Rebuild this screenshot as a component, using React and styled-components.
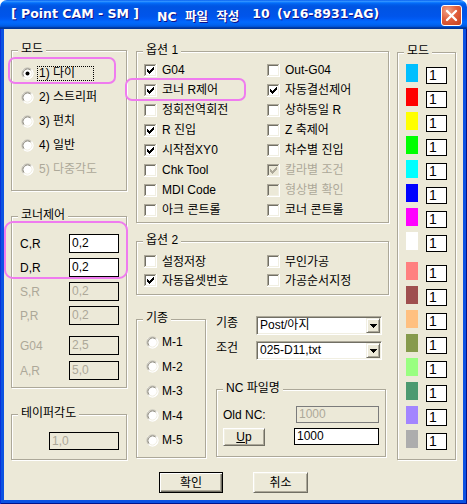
import styled, { createGlobalStyle } from "styled-components"

const FONT = `"Liberation Sans", "Noto Sans CJK KR", sans-serif`
const TITLE_FONT = `"DejaVu Sans", "Noto Sans CJK KR", sans-serif`
const FACE = "#ECE9D8"
const GRAY = "#ACA899"

const GlobalStyle = createGlobalStyle`
  html, body { margin: 0; padding: 0; background: #fff; }
  body { font-family: ${FONT}; font-size: 12px; color: #000; }
`

const modes = [
  { text: "1) 다이", checked: true, focus: true },
  { text: "2) 스트리퍼" },
  { text: "3) 펀치" },
  { text: "4) 일반" },
  { text: "5) 다중각도", disabled: true },
]

const corners = [
  { label: "C,R", value: "0,2" },
  { label: "D,R", value: "0,2" },
  { label: "S,R", value: "0,2", disabled: true },
  { label: "P,R", value: "0,2", disabled: true },
  { label: "G04", value: "2,5", disabled: true, mt: 11 },
  { label: "A,R", value: "5,0", disabled: true, mt: 6 },
]

const options1 = [
  { text: "G04", checked: true },
  { text: "Out-G04" },
  { text: "코너 R제어", checked: true },
  { text: "자동결선제어", checked: true },
  { text: "정회전역회전" },
  { text: "상하동일 R" },
  { text: "R 진입", checked: true },
  { text: "Z 축제어" },
  { text: "시작점XY0", checked: true },
  { text: "차수별 진입" },
  { text: "Chk Tool" },
  { text: "칼라별 조건", checked: true, disabled: true },
  { text: "MDI Code" },
  { text: "형상별 확인", disabled: true },
  { text: "아크 콘트롤" },
  { text: "코너 콘트롤" },
]

const options2 = [
  { text: "설정저장" },
  { text: "무인가공" },
  { text: "자동옵셋번호", checked: true },
  { text: "가공순서지정" },
]

const machines = ["M-1", "M-2", "M-3", "M-4", "M-5"]

const colors = [
  "#00BFFF", "#FF0000", "#FFFF00", "#00FF00", "#00FFFF", "#0000FF", "#FF00FF", "#FFFFFF",
  "#FF8080", "#9F4F4F", "#FFC080", "#869A4C", "#99FF80", "#4C9A70", "#A385FF", "#ADADAD",
]

function Radio({ checked }) {
  return (
    <svg width="13" height="13" viewBox="0 0 13 13">
      <circle cx="6.5" cy="6.5" r="6" fill="#fff" />
      <path d="M2.61 10.39A5.5 5.5 0 0 1 10.39 2.61" stroke={GRAY} fill="none" />
      <path d="M10.39 2.61A5.5 5.5 0 0 1 2.61 10.39" stroke="#fff" fill="none" />
      <path d="M3.32 9.68A4.5 4.5 0 0 1 9.68 3.32" stroke="#8C897D" fill="none" />
      <path d="M9.68 3.32A4.5 4.5 0 0 1 3.32 9.68" stroke="#F1EFE2" fill="none" />
      {checked && <circle cx="6.5" cy="6.5" r="2" fill="#000" />}
    </svg>
  )
}

function CheckBox({ checked, disabled }) {
  return (
    <svg width="13" height="13" viewBox="0 0 13 13" shapeRendering="crispEdges">
      <rect width="13" height="13" fill="#fff" />
      <rect width="12" height="1" fill={GRAY} />
      <rect width="1" height="12" fill={GRAY} />
      <rect x="1" y="1" width="11" height="11" fill="#F1EFE2" />
      <rect x="1" y="1" width="10" height="1" fill="#716F64" />
      <rect x="1" y="1" width="1" height="10" fill="#716F64" />
      <rect x="2" y="2" width="9" height="9" fill={disabled ? FACE : "#fff"} />
      {checked && (
        <path
          d="M3 5h1v1h1v1h1V6h1V5h1V4h1V3h1v3H9v1H8v1H7v1H6v1H5V9H4V8H3z"
          fill={disabled ? GRAY : "#000"}
        />
      )}
    </svg>
  )
}

function CloseIcon() {
  return (
    <svg width="19" height="19" viewBox="0 0 19 19">
      <path d="M5 5L14 14M14 5L5 14" stroke="#fff" strokeWidth="2.4" strokeLinecap="round" />
    </svg>
  )
}

function DownArrow() {
  return (
    <svg width="7" height="4" viewBox="0 0 7 4" shapeRendering="crispEdges">
      <path d="M0 0h7v1H6v1H5v1H4v1H3V3H2V2H1V1H0z" fill="#000" />
    </svg>
  )
}

function Combo({ value }) {
  return (
    <StCombo>
      <StComboText>{value}</StComboText>
      <StDropButton>
        <DownArrow />
      </StDropButton>
    </StCombo>
  )
}

const App = () => {
  return (
    <>
      <GlobalStyle />
      <StWindow>
        <StTitleBar>
          <StTitleText>
            <StTitlePart>[ Point CAM - SM ]</StTitlePart>
            <StTitlePart $ml={18} $ws={4}>NC 파일 작성</StTitlePart>
            <StTitlePart $ml={13} $ws={3}>10 (v16-8931-AG)</StTitlePart>
          </StTitleText>
          <StClose>
            <CloseIcon />
          </StClose>
        </StTitleBar>
        <StFrame>
          <StBody>
            <StColumns>
              <StColumn $w={116}>
                <StGroup $h={141} $pad="10px 0 0 9px">
                  <StLegend>모드</StLegend>
                  {modes.map((m) => (
                    <StRadioItem key={m.text} $h={24} $disabled={m.disabled}>
                      <Radio checked={m.checked} />
                      <StRadioText $focus={m.focus}>{m.text}</StRadioText>
                    </StRadioItem>
                  ))}
                </StGroup>

                <StGroup $h={172} $mt={25} $pad="17px 7px 0 8px">
                  <StLegend>코너제어</StLegend>
                  {corners.map((c, i) => (
                    <StFieldRow key={c.label} $mt={c.mt ?? (i ? 5 : 0)}>
                      <StText $disabled={c.disabled}>{c.label}</StText>
                      <StTextBox $w={50} $h={19} $disabled={c.disabled}>{c.value}</StTextBox>
                    </StFieldRow>
                  ))}
                </StGroup>

                <StGroup $h={46} $mt={26} $pad="16px 7px 0 0">
                  <StLegend>테이퍼각도</StLegend>
                  <StFieldRow $end>
                    <StTextBox $w={70} $h={18} $disabled>1,0</StTextBox>
                  </StFieldRow>
                </StGroup>
              </StColumn>

              <StColumn $w={253} $ml={9} $mt={1}>
                <StGroup $h={172} $pad="8px 0 0 7px">
                  <StLegend>옵션 1</StLegend>
                  <StCheckGrid $rh={20}>
                    {options1.map((o) => (
                      <StCheckItem key={o.text} $disabled={o.disabled}>
                        <CheckBox checked={o.checked} disabled={o.disabled} />
                        <span>{o.text}</span>
                      </StCheckItem>
                    ))}
                  </StCheckGrid>
                </StGroup>

                <StGroup $h={54} $mt={18} $pad="10px 0 0 7px">
                  <StLegend>옵션 2</StLegend>
                  <StCheckGrid $rh={19}>
                    {options2.map((o) => (
                      <StCheckItem key={o.text}>
                        <CheckBox checked={o.checked} />
                        <span>{o.text}</span>
                      </StCheckItem>
                    ))}
                  </StCheckGrid>
                </StGroup>

                <StSplit>
                  <StGroup $w={70} $h={139} $mt={3} $pad="10px 0 0 9px">
                    <StLegend>기종</StLegend>
                    {machines.map((m) => (
                      <StRadioItem key={m} $h={24.5}>
                        <Radio />
                        <StMachineText>{m}</StMachineText>
                      </StRadioItem>
                    ))}
                  </StGroup>

                  <StSide>
                    <StSideRow>
                      <StSideLabel>기종</StSideLabel>
                      <Combo value="Post/아지" />
                    </StSideRow>
                    <StSideRow $mt={6}>
                      <StSideLabel>조건</StSideLabel>
                      <Combo value="025-D11,txt" />
                    </StSideRow>

                    <StGroup $w={170} $h={68} $mt={29} $pad="16px 6px 0 6px">
                      <StLegend>NC 파일명</StLegend>
                      <StFieldRow $h={17}>
                        <StText>Old NC:</StText>
                        <StTextBox $w={83} $h={17} $disabled $border="#7B7B7B">1000</StTextBox>
                      </StFieldRow>
                      <StFieldRow $h={19} $mt={4}>
                        <StPushButton $w={42} $h={18}>
                          <u>U</u>p
                        </StPushButton>
                        <StTextBox $w={85} $h={17}>1000</StTextBox>
                      </StFieldRow>
                    </StGroup>
                  </StSide>
                </StSplit>
              </StColumn>

              <StColumn $w={59} $ml={8} $mt={2}>
                <StGroup $h={408} $pad="11px 0 0 8px">
                  <StLegend>모드</StLegend>
                  {colors.map((c, i) => (
                    <StColorRow key={i} $mt={i === 8 ? 6 : 0}>
                      <StSwatch $color={c} />
                      <StValueBox>1</StValueBox>
                    </StColorRow>
                  ))}
                </StGroup>
              </StColumn>
            </StColumns>

            <StFooter>
              <StPushButton $w={64} $h={21} $default>확인</StPushButton>
              <StPushButton $w={55} $h={21}>취소</StPushButton>
            </StFooter>

            <StHighlight $x={4} $y={28} $w={108} $h={27} />
            <StHighlight $x={0} $y={192} $w={124} $h={58} $r={9} />
            <StHighlight $x={121} $y={49} $w={121} $h={23} />
          </StBody>
        </StFrame>
      </StWindow>
    </>
  )
}

const StWindow = styled.div`
  width: 467px;
  height: 504px;
  display: flex;
  flex-direction: column;
  overflow: hidden;
`
const StTitleBar = styled.div`
  flex-shrink: 0;
  height: 29px;
  box-sizing: border-box;
  padding: 0 5px 0 11px;
  display: flex;
  align-items: center;
  justify-content: space-between;
  border-radius: 7px 7px 0 0;
  background: linear-gradient(
    to bottom,
    #0058ee 0%, #3593ff 4%, #288eff 6%, #127dff 8%, #036ffc 10%, #0262ee 14%,
    #0057e5 20%, #0054e3 24%, #0055eb 56%, #005bf5 66%, #026afe 76%, #0062ef 86%,
    #0052d6 92%, #0040ab 94%, #003092 100%
  );
`
const StTitleText = styled.div`
  display: flex;
  color: #fff;
  font-family: ${TITLE_FONT};
  font-weight: bold;
  font-size: 12.5px;
  white-space: pre;
  padding-top: 2px;
  text-shadow: 1px 1px #0f1089;
`
const StTitlePart = styled.span`
  margin-left: ${(p) => p.$ml || 0}px;
  word-spacing: ${(p) => p.$ws || 0}px;
`
const StClose = styled.div`
  width: 21px;
  height: 21px;
  margin-top: 2px;
  box-sizing: border-box;
  border: 1px solid #fff;
  border-radius: 3px;
  display: flex;
  align-items: center;
  justify-content: center;
  background: radial-gradient(circle at 30% 25%, #f0a48a 0%, #e2603e 45%, #c8401c 100%);
`
const StFrame = styled.div`
  flex: 1;
  display: flex;
  padding: 0 4px 4px 4px;
  background: #0b52e2;
  box-shadow: inset 1px 0 #0831d9, inset -1px 0 #00138c, inset 0 -1px #00138c;
`
const StBody = styled.div`
  flex: 1;
  position: relative;
  display: flex;
  flex-direction: column;
  box-sizing: border-box;
  padding: 21px 7px 0 7px;
  background: ${FACE};
  line-height: 14px;
`
const StColumns = styled.div`
  display: flex;
  align-items: flex-start;
`
const StColumn = styled.div`
  width: ${(p) => p.$w}px;
  margin-left: ${(p) => p.$ml || 0}px;
  margin-top: ${(p) => p.$mt || 0}px;
  display: flex;
  flex-direction: column;
`
const StGroup = styled.div`
  position: relative;
  box-sizing: border-box;
  flex-shrink: 0;
  width: ${(p) => (p.$w ? `${p.$w}px` : "auto")};
  height: ${(p) => p.$h}px;
  margin-top: ${(p) => p.$mt || 0}px;
  padding: ${(p) => p.$pad};
  border: 1px solid ${GRAY};
  box-shadow: inset 1px 1px #fff, 1px 1px #fff;
`
const StLegend = styled.div`
  position: absolute;
  top: -9px;
  left: 6px;
  padding: 0 3px;
  background: ${FACE};
  line-height: 14px;
  white-space: nowrap;
`
const StRadioItem = styled.div`
  height: ${(p) => p.$h}px;
  display: flex;
  align-items: center;
  color: ${(p) => (p.$disabled ? GRAY : "#000")};
  svg { flex-shrink: 0; }
`
const StRadioText = styled.span`
  margin-left: 3px;
  box-sizing: border-box;
  width: 57px;
  height: 15px;
  padding-left: 1px;
  line-height: 13px;
  white-space: nowrap;
  border: 1px ${(p) => (p.$focus ? "dotted #000" : "solid transparent")};
`
const StMachineText = styled.span`
  margin-left: 3px;
`
const StCheckGrid = styled.div`
  display: grid;
  grid-template-columns: 123px 1fr;
  grid-auto-rows: ${(p) => p.$rh}px;
`
const StCheckItem = styled.div`
  display: flex;
  align-items: center;
  gap: 5px;
  white-space: nowrap;
  color: ${(p) => (p.$disabled ? GRAY : "#000")};
  svg { flex-shrink: 0; }
`
const StFieldRow = styled.div`
  display: flex;
  align-items: center;
  justify-content: ${(p) => (p.$end ? "flex-end" : "space-between")};
  height: ${(p) => p.$h || 19}px;
  margin-top: ${(p) => p.$mt || 0}px;
`
const StText = styled.span`
  color: ${(p) => (p.$disabled ? GRAY : "#000")};
  white-space: nowrap;
`
const StTextBox = styled.div`
  box-sizing: border-box;
  width: ${(p) => p.$w}px;
  height: ${(p) => p.$h}px;
  padding-left: 2px;
  line-height: ${(p) => p.$h - 2}px;
  border: 1px solid ${(p) => p.$border || "#000"};
  background: ${(p) => (p.$disabled ? FACE : "#fff")};
  color: ${(p) => (p.$disabled ? GRAY : "#000")};
`
const StSplit = styled.div`
  display: flex;
  align-items: flex-start;
  margin-top: 21px;
`
const StSide = styled.div`
  width: 173px;
  margin-left: 10px;
  display: flex;
  flex-direction: column;
`
const StSideRow = styled.div`
  display: flex;
  align-items: flex-start;
  height: 19px;
  margin-top: ${(p) => p.$mt || 0}px;
`
const StSideLabel = styled.span`
  width: 40px;
  flex-shrink: 0;
`
const StCombo = styled.div`
  box-sizing: border-box;
  width: 126px;
  height: 19px;
  display: flex;
  align-items: stretch;
  background: #fff;
  border: 1px solid;
  border-color: ${GRAY} #fff #fff ${GRAY};
  box-shadow: inset 1px 1px #716f64, inset -1px -1px #f1efe2;
  padding: 1px;
`
const StComboText = styled.div`
  flex: 1;
  padding-left: 2px;
  line-height: 15px;
  white-space: nowrap;
  overflow: hidden;
`
const StDropButton = styled.div`
  box-sizing: border-box;
  width: 14px;
  display: flex;
  align-items: center;
  justify-content: center;
  background: ${FACE};
  border: 1px solid;
  border-color: #f1efe2 #716f64 #716f64 #f1efe2;
  box-shadow: inset 1px 1px #fff, inset -1px -1px ${GRAY};
`
const StPushButton = styled.div`
  box-sizing: border-box;
  width: ${(p) => p.$w}px;
  height: ${(p) => p.$h}px;
  display: flex;
  align-items: center;
  justify-content: center;
  background: ${FACE};
  border: 1px solid;
  border-color: ${(p) => (p.$default ? "#000" : "#fff #716f64 #716f64 #fff")};
  box-shadow: ${(p) =>
    p.$default
      ? `inset 1px 1px #fff, inset -1px -1px #716f64, inset -2px -2px ${GRAY}`
      : `inset 1px 1px #f1efe2, inset -1px -1px ${GRAY}`};
  u { text-decoration: underline; }
`
const StColorRow = styled.div`
  display: flex;
  align-items: flex-start;
  height: 24px;
  margin-top: ${(p) => p.$mt}px;
`
const StSwatch = styled.div`
  width: 12px;
  height: 18px;
  background: ${(p) => p.$color};
`
const StValueBox = styled.div`
  box-sizing: border-box;
  width: 21px;
  height: 17px;
  margin: 3px 0 0 8px;
  padding-left: 2px;
  border: 1px solid #000;
  background: #fff;
  font-size: 14px;
  line-height: 15px;
`
const StFooter = styled.div`
  display: flex;
  justify-content: center;
  gap: 30px;
  margin-top: 12px;
`
const StHighlight = styled.div`
  position: absolute;
  left: ${(p) => p.$x}px;
  top: ${(p) => p.$y}px;
  width: ${(p) => p.$w}px;
  height: ${(p) => p.$h}px;
  box-sizing: border-box;
  border: 2px solid #ef7bef;
  border-radius: ${(p) => p.$r || 7}px;
  pointer-events: none;
`

export default App
